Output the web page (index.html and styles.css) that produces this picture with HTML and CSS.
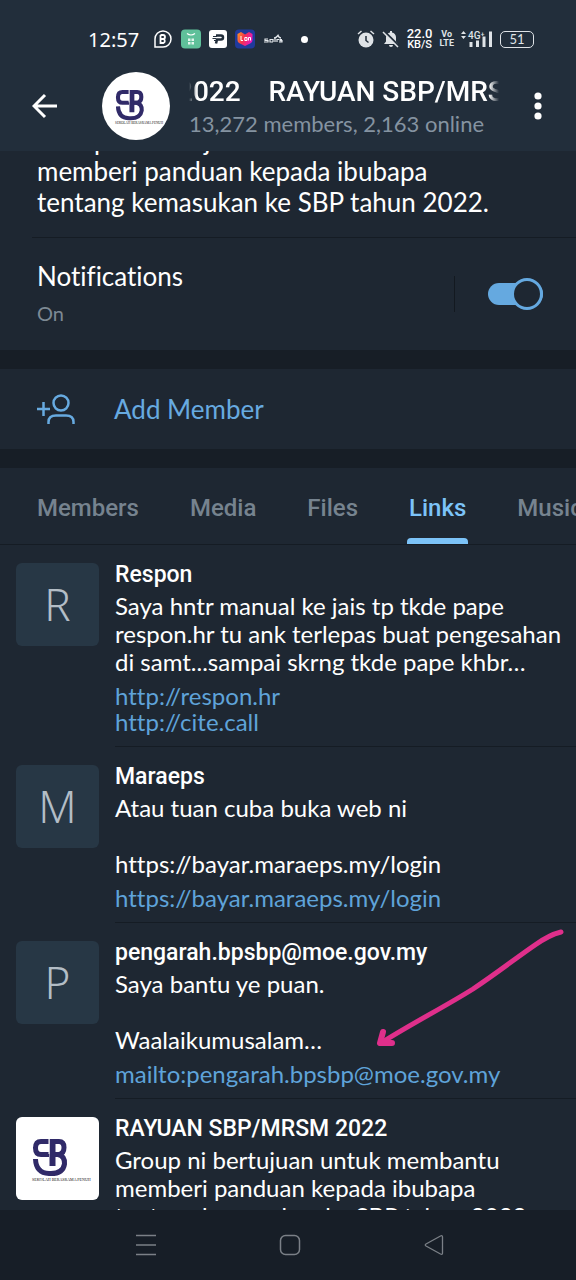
FILE: index.html
```html
<!DOCTYPE html>
<html lang="ms">
<head>
    <meta charset="UTF-8">
    <meta name="viewport" content="width=device-width, initial-scale=1.0">
    <title>RAYUAN SBP/MRSM 2022</title>
    <link rel="stylesheet" href="styles.css">
</head>
<body>
    <!-- shared logo -->
    <svg class="defs" aria-hidden="true">
        <symbol id="logo" viewBox="0 0 83 83">
            <rect width="83" height="83" fill="#fff"/>
            <g fill="none" stroke="#302a68" stroke-width="5">
                <path d="M33 24.500H25Q19.500 24.500 19.500 31T25 37.500H33"/>
                <path d="M36.500 22V49" stroke-width="6"/>
                <path d="M39 24.500H43Q48 24.500 48 30.500T43 37.500H39"/>
                <path d="M39 37.500H42Q49 39 48.500 47Q47 56.500 35 56.500H33Q20 56 19.500 42"/>
            </g>
            <path d="M33 22V37" stroke="#fff" stroke-width="1"/>
            <text x="16" y="64" class="logo-text">SEKOLAH BERASRAMA PENUH</text>
        </symbol>
    </svg>

    <div class="screen">
        <header class="header">
            <div class="status-bar">
                <span class="time">12:57</span>
                <div class="status-apps">
                    <svg width="20" height="20" viewBox="0 0 20 20">
                        <path d="M2 18V10A8 8 0 1 1 10 18Z" fill="none" stroke="#fff" stroke-width="1.500"/>
                        <path d="M7.500 6V14H10.500A2.200 2.200 0 0 0 10.500 10H7.500M7.500 6H10A2 2 0 0 1 10 10" fill="none" stroke="#fff" stroke-width="1.800"/>
                    </svg>
                    <svg width="20" height="20" viewBox="0 0 20 20">
                        <rect x="0" y="0.500" width="20" height="19" rx="4" fill="#5fc09a"/>
                        <path d="M6 4.500Q10 7.500 14 4.500" fill="none" stroke="#fff" stroke-width="1.200"/>
                        <path d="M7 9.500H9.500V12H7ZM10.500 9.500H13V12H10.500ZM7 13H9.500V15.500H7ZM10.500 13H13V15.500H10.500Z" fill="#e3f5ee"/>
                    </svg>
                    <svg width="18" height="18" viewBox="0 0 18 18">
                        <rect width="18" height="18" rx="3" fill="#fff"/>
                        <path d="M7 5.500H12A2 2 0 0 1 12 9.500H8L7 13.500" fill="none" stroke="#222e3b" stroke-width="2.500"/>
                        <path d="M4 6.500H8M3.500 8.500H7M5 10.500H8" stroke="#222e3b" stroke-width="1.200"/>
                    </svg>
                    <svg width="20" height="20" viewBox="0 0 20 20">
                        <defs>
                            <linearGradient id="heart" x1="0" y1="0" x2="1" y2="0.400">
                                <stop offset="0" stop-color="#ff9d1c"/>
                                <stop offset="0.500" stop-color="#f4324f"/>
                                <stop offset="1" stop-color="#e61bb8"/>
                            </linearGradient>
                        </defs>
                        <rect y="0.500" width="20" height="19" rx="4" fill="#203a9c"/>
                        <path d="M10 17L4 14Q2.500 13 2.500 11V5L6 3L10 5.500L14 3L17.500 5V11Q17.500 13 16 14Z" fill="url(#heart)"/>
                        <path d="M6 7V11.500H8M12 8.500H9.800V11.500H12V8.500M13.500 11.500V8.500H15.500V11.500" fill="none" stroke="#fff" stroke-width="1"/>
                    </svg>
                    <svg width="20" height="20" viewBox="0 0 20 20">
                        <path d="M5 10H2V11.500H5V13H1M10 13V10.500H7V13H10M12 13V9M14 13V10.500H16M19 10.500H17V11.700H19V13H16" fill="none" stroke="#e4e8ec" stroke-width="1.200"/>
                        <path d="M11 9Q13 9 15 6.500Q16 9 18 9" fill="none" stroke="#e4e8ec" stroke-width="1.500"/>
                    </svg>
                    <span class="dot"></span>
                </div>
                <div class="status-icons">
                    <svg width="18" height="18" viewBox="0 0 18 18">
                        <circle cx="9" cy="10" r="7.500" fill="#dfe3e7"/>
                        <path d="M1 4L4.500 1M17 4L13.500 1" stroke="#dfe3e7" stroke-width="1.500"/>
                        <path d="M9 6V10.500L11.500 12.500" fill="none" stroke="#222e3b" stroke-width="1.500"/>
                    </svg>
                    <svg width="18" height="18" viewBox="0 0 18 18">
                        <path d="M2 14L4 11.500V7Q4.500 3 8 2.500V1H10V2.500Q13.500 3 14 7V11.500L16 14ZM7 15H11Q11 17 9 17T7 15Z" fill="#dfe3e7"/>
                        <path d="M2.500 1.500L17.500 16.500" stroke="#222e3b" stroke-width="2"/>
                        <path d="M1 2L16 17" stroke="#dfe3e7" stroke-width="1.500"/>
                    </svg>
                    <span class="stack speed"><b>22.0</b><small>KB/S</small></span>
                    <span class="stack volte"><b>Vo</b><b>LTE</b></span>
                    <svg width="32" height="18" viewBox="0 0 32 18">
                        <path d="M0 4L2.500 1L5 4ZM0 6L2.500 9L5 6Z" fill="#dfe3e7"/>
                        <path d="M8.500 12H11.500V17H8.500ZM15 10.500H18V17H15ZM21.500 6.500H24.500V17H21.500ZM28 1.500H31V17H28Z" fill="#dfe3e7"/>
                        <text x="7" y="9" class="signal-text">4G⁺</text>
                    </svg>
                    <span class="battery">51</span>
                </div>
            </div>
            <div class="toolbar">
                <button class="icon-btn back" aria-label="Back">
                    <svg width="26" height="26" viewBox="0 0 26 26">
                        <path d="M13 2L2 13L13 24M2.500 13H25" fill="none" stroke="#fff" stroke-width="3"/>
                    </svg>
                </button>
                <svg class="group-photo"><use href="#logo"/></svg>
                <div class="group-info">
                    <h1 class="group-name">2022    RAYUAN SBP/MRSM</h1>
                    <p class="group-status">13,272 members, 2,163 online</p>
                </div>
                <button class="icon-btn more" aria-label="More options">
                    <svg width="8" height="28" viewBox="0 0 8 28">
                        <g fill="#fff"><circle cx="4" cy="4" r="3.600"/><circle cx="4" cy="14" r="3.600"/><circle cx="4" cy="24" r="3.600"/></g>
                    </svg>
                </button>
            </div>
        </header>

        <main class="content">
            <section class="about">
                <p>Group ni bertujuan untuk membantu<br>memberi panduan kepada ibubapa<br>tentang kemasukan ke SBP tahun 2022.</p>
            </section>
            <section class="notifications">
                <label class="notif-label" for="notif">Notifications<span>On</span></label>
                <div class="notif-toggle">
                    <input type="checkbox" id="notif" class="toggle" checked>
                </div>
            </section>
            <button class="add-member">
                <svg width="40" height="34" viewBox="0 0 40 34">
                    <g fill="none" stroke="#67aae0" stroke-width="2.500">
                        <path d="M0 17H13M6.500 10V24"/>
                        <circle cx="24" cy="11" r="7.500"/>
                        <path d="M11.500 32V30Q11.500 23.500 19 23.500H29Q36.500 23.500 36.500 30V32"/>
                    </g>
                </svg>
                Add Member
            </button>
            <nav class="tabs">
                <a href="#members">Members</a>
                <a href="#media">Media</a>
                <a href="#files">Files</a>
                <a href="#links" class="active">Links</a>
                <a href="#music">Music</a>
            </nav>

            <div class="links" id="links">
                <article class="link-item">
                    <div class="thumb">R</div>
                    <div class="link-body">
                        <h2>Respon</h2>
                        <p>Saya hntr manual ke jais tp tkde pape<br>respon.hr tu ank terlepas buat pengesahan<br>di samt...sampai skrng tkde pape khbr…</p>
                        <a href="http://respon.hr">http://respon.hr</a>
                        <a href="http://cite.call">http://cite.call</a>
                    </div>
                </article>
                <article class="link-item">
                    <div class="thumb">M</div>
                    <div class="link-body">
                        <h2>Maraeps</h2>
                        <p>Atau tuan cuba buka web ni<br><br>https://bayar.maraeps.my/login</p>
                        <a href="https://bayar.maraeps.my/login">https://bayar.maraeps.my/login</a>
                    </div>
                </article>
                <article class="link-item">
                    <div class="thumb">P</div>
                    <div class="link-body">
                        <h2>pengarah.bpsbp@moe.gov.my</h2>
                        <p>Saya bantu ye puan.<br><br>Waalaikumusalam…</p>
                        <a href="mailto:pengarah.bpsbp@moe.gov.my">mailto:pengarah.bpsbp@moe.gov.my</a>
                    </div>
                    <svg class="arrow" width="192" height="124" viewBox="0 0 192 124">
                        <g fill="none" stroke="#df2f8b" stroke-width="5" stroke-linecap="round" stroke-linejoin="round">
                            <path d="M187 4Q175 7 161 17C142 30 123 45 99 61C72 78 37 96 7 115"/>
                            <path d="M9 104L6 115L18 115" stroke-width="6"/>
                        </g>
                    </svg>
                </article>
                <article class="link-item">
                    <svg class="thumb"><use href="#logo"/></svg>
                    <div class="link-body">
                        <h2>RAYUAN SBP/MRSM 2022</h2>
                        <p>Group ni bertujuan untuk membantu<br>memberi panduan kepada ibubapa<br>tentang kemasukan ke SBP tahun 2022.</p>
                    </div>
                </article>
            </div>
        </main>

        <footer class="nav-bar">
            <button class="icon-btn" aria-label="Recent apps">
                <svg width="22" height="22" viewBox="0 0 22 22"><path d="M1 1.500H21M1 11H21M1 20.500H21" stroke="#7b8087" stroke-width="1.500"/></svg>
            </button>
            <button class="icon-btn" aria-label="Home">
                <svg width="22" height="22" viewBox="0 0 22 22"><rect x="1.500" y="1.500" width="19" height="19" rx="5" fill="none" stroke="#7b8087" stroke-width="1.500"/></svg>
            </button>
            <button class="icon-btn" aria-label="Back">
                <svg width="22" height="22" viewBox="0 0 22 22"><path d="M19.500 3V19Q19.500 21 17.500 20L3 12Q1.500 11 3 10L17.500 2Q19.500 1 19.500 3Z" fill="none" stroke="#7b8087" stroke-width="1.300"/></svg>
            </button>
        </footer>
    </div>
</body>
</html>
```
FILE: styles.css
```css
*, *::before, *::after {
    box-sizing: border-box;
}

body {
    margin: 0;
    background: #1e2732;
    color: #fff;
    font-family: Lato, "Liberation Sans", sans-serif;
    font-variant-ligatures: none;
}

h1, h2, p {
    margin: 0;
}

a {
    text-decoration: none;
}

button {
    border: none;
    background: none;
    padding: 0;
    font-family: inherit;
    cursor: pointer;
}

svg {
    display: block;
    flex-shrink: 0;
}

.defs {
    position: absolute;
    width: 0;
    height: 0;
}

.logo-text {
    font-family: "Liberation Serif", serif;
    font-size: 4px;
    fill: #111;
}

.screen {
    display: flex;
    flex-direction: column;
    height: 100vh;
    overflow: hidden;
}

/* header */
.header {
    background: #222e3b;
    flex-shrink: 0;
}

.status-bar {
    display: flex;
    align-items: center;
    padding: 18px 42px 0 88px;
    height: 60px;
}

.time {
    font-family: "Noto Sans", sans-serif;
    font-size: 20px;
}

.status-apps {
    display: flex;
    align-items: center;
    gap: 8px;
    margin-left: 14px;
}

.dot {
    width: 7px;
    height: 7px;
    margin-left: 10px;
    border-radius: 50%;
    background: #fff;
}

.status-icons {
    display: flex;
    align-items: center;
    gap: 7px;
    margin-left: auto;
    color: #dfe3e7;
}

.stack {
    display: flex;
    flex-direction: column;
    align-items: center;
    font-family: Roboto, sans-serif;
}

.stack b, .stack small {
    font-weight: 500;
}

.speed {
    font-size: 13px;
    line-height: 11px;
    color: #fff;
}

.speed small {
    font-size: 11px;
}

.volte {
    font-size: 9px;
    line-height: 9px;
}

.volte b {
    font-weight: 700;
}

.signal-text {
    font-family: Roboto, sans-serif;
    font-size: 10px;
    font-weight: 500;
    fill: #dfe3e7;
}

.battery {
    width: 34px;
    height: 17px;
    border: 1px solid #dfe3e7;
    border-radius: 5px;
    font-size: 13px;
    line-height: 15px;
    text-align: center;
}

.toolbar {
    display: flex;
    align-items: center;
    height: 91px;
    padding: 0 34px 0 32px;
}

.icon-btn {
    display: flex;
    align-items: center;
    justify-content: center;
}

.group-photo {
    width: 68px;
    height: 68px;
    margin: 0 19px 0 44px;
    border-radius: 50%;
}

.group-info {
    flex: 1;
    min-width: 0;
    margin-right: 35px;
}

.group-name {
    overflow: hidden;
    white-space: pre;
    text-indent: -12px; /* scrolled title */
    font-family: Roboto, sans-serif;
    font-size: 28px;
    line-height: 36px;
    font-weight: 500;
    mask-image: linear-gradient(to right, transparent, #000 8px, #000 calc(100% - 10px), transparent);
}

.group-status {
    font-size: 22px;
    line-height: 28px;
    color: #8593a1;
    white-space: nowrap;
}

/* content */
.content {
    flex: 1;
    min-height: 0;
    overflow: hidden;
}

.about {
    display: flex;
    flex-direction: column;
    justify-content: flex-end;
    height: 87px;
    overflow: hidden;
    margin-left: 32px;
    padding: 0 0 19px 5px;
    border-bottom: 1px solid #151c24;
    font-size: 26px;
    line-height: 31px;
    white-space: nowrap;
}

.notifications {
    display: flex;
    align-items: center;
    justify-content: space-between;
    height: 112px;
    padding: 0 33px 0 37px;
}

.notif-label {
    font-size: 26px;
    line-height: 38px;
}

.notif-label span {
    display: block;
    font-size: 20px;
    line-height: 36px;
    color: #7d8994;
}

.notif-toggle {
    display: flex;
    align-items: center;
    height: 36px;
    padding-left: 33px;
    border-left: 1px solid #131920;
}

.toggle {
    appearance: none;
    display: flex;
    align-items: center;
    justify-content: flex-end;
    width: 55px;
    height: 22px;
    margin: 0;
    background: #65a9e0;
    border-radius: 11px;
}

.toggle::before {
    content: "";
    flex-shrink: 0;
    width: 32px;
    height: 32px;
    border: 3px solid #65a9e0;
    border-radius: 50%;
    background: #1e2732;
}

.add-member {
    display: flex;
    align-items: center;
    gap: 37px;
    width: 100%;
    height: 118px;
    padding: 0 37px;
    border-top: 19px solid #171e26;
    border-bottom: 19px solid #171e26;
    font-size: 26px;
    color: #67aae0;
}

.tabs {
    display: flex;
    gap: 47px;
    height: 77px;
    padding: 0 35px;
    overflow: hidden;
    border-bottom: 1px solid #151c24;
    font-family: Roboto, sans-serif;
    font-size: 24px;
    line-height: 80px;
    font-weight: 500;
}

.tabs a {
    position: relative;
    padding: 0 2px;
    color: #76838f;
}

.tabs .active {
    color: #7cc3f8;
}

.tabs .active::after {
    content: "";
    position: absolute;
    left: 0;
    right: 0;
    bottom: 0;
    height: 6px;
    border-radius: 4px 4px 0 0;
    background: #7cc3f8;
}

.link-item {
    display: flex;
    gap: 16px;
    position: relative;
    padding-left: 16px;
}

.thumb {
    flex-shrink: 0;
    width: 83px;
    height: 83px;
    margin-top: 18px;
    border-radius: 6px;
    background: #273745;
    color: #b3bdc6;
    font-family: "Noto Sans", sans-serif;
    font-size: 44px;
    font-weight: 300;
    line-height: 83px;
    text-align: center;
}

.link-body {
    flex: 1;
    min-width: 0;
    padding: 18px 0 10px;
    border-bottom: 1px solid #151c24;
    font-size: 24px;
    white-space: nowrap;
}

.link-body h2 {
    margin-bottom: 5px;
    font-family: Roboto, sans-serif;
    font-size: 23px;
    line-height: 24px;
    font-weight: 500;
}

.link-body p {
    margin-bottom: 7px;
    line-height: 28px;
}

.link-body a {
    display: block;
    line-height: 26px;
    color: #5fa3d9;
}

.link-body a:last-child {
    margin-bottom: 1px;
}

.arrow {
    position: absolute;
    top: 5px;
    right: 10px;
}

/* system navigation */
.nav-bar {
    display: flex;
    justify-content: center;
    gap: 122px;
    height: 70px;
    padding-left: 4px;
    flex-shrink: 0;
    background: #171e27;
}
```
